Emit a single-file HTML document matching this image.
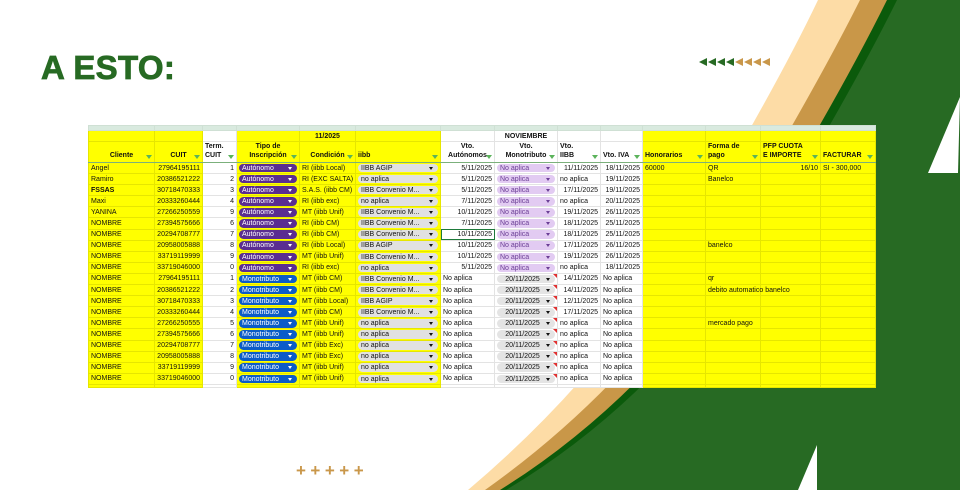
<!DOCTYPE html>
<html><head><meta charset="utf-8">
<style>
*{margin:0;padding:0;box-sizing:border-box}
body{width:960px;height:490px;overflow:hidden;background:#fff;position:relative;font-family:"Liberation Sans",Arial,sans-serif}
#bg{position:absolute;left:0;top:0}
h1{position:absolute;left:41px;top:50px;font-size:33px;font-weight:bold;color:#276a23;line-height:36px;letter-spacing:0.3px;-webkit-text-stroke:0.8px #276a23}
.arr{position:absolute;top:58px;left:699px;font-size:0}
.arr i{display:inline-block;width:0;height:0;border-top:4.5px solid transparent;border-bottom:4.5px solid transparent;border-right:8px solid #276a23;margin-right:1px}
.arr i.t{border-right-color:#c9974a}
.plus{position:absolute;left:296px;top:461px;color:#c9974a;font-size:17px;font-weight:bold;letter-spacing:4.5px}
table{position:absolute;left:88px;top:125px;border-collapse:collapse;table-layout:fixed;width:787px;font-size:7px;color:#111;background:#fff}
td{border:1px solid #e3e3e3;height:11.1px;padding:0 2px;white-space:nowrap;overflow:hidden;line-height:9px}
.y{background:#ffff00;border-color:#e6e600}
tr.top td{height:5px;background:#d9eadf;border-color:#cfe0d4}
tr.h1 td{height:11px;font-weight:bold;text-align:center}
tr.h2 td{height:21px;font-weight:bold;vertical-align:bottom;padding-bottom:2px;border-bottom:1px solid #7bb07b;position:relative}
tr.h2 td b{position:absolute;right:2px;bottom:3px;width:0;height:0;border-left:3px solid transparent;border-right:3px solid transparent;border-top:4px solid #5bb35b}
.r{text-align:right}
.c{text-align:center}
.chip{display:block;border-radius:5px;height:8.5px;line-height:9px;padding:0 3px;font-size:7px;position:relative}
.chip:after{content:"";position:absolute;right:5px;top:3px;border-left:2.5px solid transparent;border-right:2.5px solid transparent;border-top:3px solid currentColor}
.au{background:#5a2d91;color:#fff}
.mo{background:#0b5cc8;color:#fff}
.ib{background:#e1e1e1;color:#111}
.na{background:#e2cbf2;color:#6a3d95}
.dt{background:#e4e4e4;color:#111;text-align:center;padding-right:10px}
.red{position:relative}
.red:after{content:"";position:absolute;right:0;top:0;border-left:4px solid transparent;border-top:4px solid #e03030}
.sel{outline:1.5px solid #1e7a3a;outline-offset:-1px}
tr.last td{height:3px;border-top:1px solid #7bb07b}
</style></head><body>
<svg id="bg" width="960" height="490" viewBox="0 0 960 490">
<path d="M818,0 Q780,80 700,215 Q610,370 468,490 L960,490 L960,0Z" fill="#fddca6"/>
<path d="M860,0 Q820,80 740,215 Q640,380 485,490 L960,490 L960,0Z" fill="#c99748"/>
<path d="M887,0 Q845,85 770,210 Q660,390 500,490 L960,490 L960,0Z" fill="#0b5a0b"/>
<path d="M897,0 Q855,85 780,210 Q670,392 506,490 L960,490 L960,0Z" fill="#276a23"/>
<path d="M960,97 L928,173 L958,173Z" fill="#fff"/>
<path d="M798,490 L817,445 L817,490Z" fill="#fff"/>
</svg>
<h1>A ESTO:</h1>
<div class="arr"><i></i><i></i><i></i><i></i><i class="t"></i><i class="t"></i><i class="t"></i><i class="t"></i></div>
<div class="plus">+++++</div>
<table>
<colgroup><col style="width:66px"><col style="width:48px"><col style="width:34px"><col style="width:63px"><col style="width:56px"><col style="width:85px"><col style="width:54px"><col style="width:63px"><col style="width:43px"><col style="width:42px"><col style="width:63px"><col style="width:55px"><col style="width:60px"><col style="width:55px"></colgroup>
<tr class="top"><td></td><td></td><td></td><td></td><td></td><td></td><td></td><td></td><td></td><td></td><td></td><td></td><td></td><td></td></tr>
<tr class="h1"><td class="y"></td><td class="y"></td><td></td><td class="y"></td><td class="y">11/2025</td><td class="y"></td><td></td><td>NOVIEMBRE</td><td></td><td></td><td class="y"></td><td class="y"></td><td class="y"></td><td class="y"></td></tr>
<tr class="h2"><td class="y c">Cliente<b></b></td><td class="y c">CUIT<b></b></td><td>Term.<br>CUIT<b></b></td><td class="y c">Tipo de<br>Inscripción<b></b></td><td class="y c">Condición<b></b></td><td class="y">iibb<b></b></td><td class="c">Vto.<br>Autónomos<b></b></td><td class="c">Vto.<br>Monotributo<b></b></td><td>Vto.<br>IIBB<b></b></td><td>Vto. IVA<b></b></td><td class="y">Honorarios<b></b></td><td class="y">Forma de<br>pago<b></b></td><td class="y">PFP CUOTA<br>E IMPORTE<b></b></td><td class="y">FACTURAR<b></b></td></tr>
<tr><td class="y">Angel</td><td class="y r">27964195111</td><td class="r">1</td><td class="y"><span class="chip au">Autónomo</span></td><td class="y">RI (iibb Local)</td><td class="y"><span class="chip ib">IIBB AGIP</span></td><td class="r">5/11/2025</td><td><span class="chip na">No aplica</span></td><td class="r">11/11/2025</td><td class="r">18/11/2025</td><td class="y">60000</td><td class="y">QR</td><td class="y r">16/10</td><td class="y">SI - 300,000</td></tr>
<tr><td class="y">Ramiro</td><td class="y r">20386521222</td><td class="r">2</td><td class="y"><span class="chip au">Autónomo</span></td><td class="y">RI (EXC SALTA)</td><td class="y"><span class="chip ib">no aplica</span></td><td class="r">5/11/2025</td><td><span class="chip na">No aplica</span></td><td>no aplica</td><td class="r">19/11/2025</td><td class="y"></td><td class="y">Banelco</td><td class="y"></td><td class="y"></td></tr>
<tr><td class="y"><b>FSSAS</b></td><td class="y r">30718470333</td><td class="r">3</td><td class="y"><span class="chip au">Autónomo</span></td><td class="y">S.A.S. (iibb CM)</td><td class="y"><span class="chip ib">IIBB Convenio M...</span></td><td class="r">5/11/2025</td><td><span class="chip na">No aplica</span></td><td class="r">17/11/2025</td><td class="r">19/11/2025</td><td class="y"></td><td class="y"></td><td class="y"></td><td class="y"></td></tr>
<tr><td class="y">Maxi</td><td class="y r">20333260444</td><td class="r">4</td><td class="y"><span class="chip au">Autónomo</span></td><td class="y">RI (iibb exc)</td><td class="y"><span class="chip ib">no aplica</span></td><td class="r">7/11/2025</td><td><span class="chip na">No aplica</span></td><td>no aplica</td><td class="r">20/11/2025</td><td class="y"></td><td class="y"></td><td class="y"></td><td class="y"></td></tr>
<tr><td class="y">YANINA</td><td class="y r">27266250559</td><td class="r">9</td><td class="y"><span class="chip au">Autónomo</span></td><td class="y">MT (iibb Unif)</td><td class="y"><span class="chip ib">IIBB Convenio M...</span></td><td class="r">10/11/2025</td><td><span class="chip na">No aplica</span></td><td class="r">19/11/2025</td><td class="r">26/11/2025</td><td class="y"></td><td class="y"></td><td class="y"></td><td class="y"></td></tr>
<tr><td class="y">NOMBRE</td><td class="y r">27394575666</td><td class="r">6</td><td class="y"><span class="chip au">Autónomo</span></td><td class="y">RI (iibb CM)</td><td class="y"><span class="chip ib">IIBB Convenio M...</span></td><td class="r">7/11/2025</td><td><span class="chip na">No aplica</span></td><td class="r">18/11/2025</td><td class="r">25/11/2025</td><td class="y"></td><td class="y"></td><td class="y"></td><td class="y"></td></tr>
<tr><td class="y">NOMBRE</td><td class="y r">20294708777</td><td class="r">7</td><td class="y"><span class="chip au">Autónomo</span></td><td class="y">RI (iibb CM)</td><td class="y"><span class="chip ib">IIBB Convenio M...</span></td><td class="r sel">10/11/2025</td><td><span class="chip na">No aplica</span></td><td class="r">18/11/2025</td><td class="r">25/11/2025</td><td class="y"></td><td class="y"></td><td class="y"></td><td class="y"></td></tr>
<tr><td class="y">NOMBRE</td><td class="y r">20958005888</td><td class="r">8</td><td class="y"><span class="chip au">Autónomo</span></td><td class="y">RI (iibb Local)</td><td class="y"><span class="chip ib">IIBB AGIP</span></td><td class="r">10/11/2025</td><td><span class="chip na">No aplica</span></td><td class="r">17/11/2025</td><td class="r">26/11/2025</td><td class="y"></td><td class="y">banelco</td><td class="y"></td><td class="y"></td></tr>
<tr><td class="y">NOMBRE</td><td class="y r">33719119999</td><td class="r">9</td><td class="y"><span class="chip au">Autónomo</span></td><td class="y">MT (iibb Unif)</td><td class="y"><span class="chip ib">IIBB Convenio M...</span></td><td class="r">10/11/2025</td><td><span class="chip na">No aplica</span></td><td class="r">19/11/2025</td><td class="r">26/11/2025</td><td class="y"></td><td class="y"></td><td class="y"></td><td class="y"></td></tr>
<tr><td class="y">NOMBRE</td><td class="y r">33719046000</td><td class="r">0</td><td class="y"><span class="chip au">Autónomo</span></td><td class="y">RI (iibb exc)</td><td class="y"><span class="chip ib">no aplica</span></td><td class="r">5/11/2025</td><td><span class="chip na">No aplica</span></td><td>no aplica</td><td class="r">18/11/2025</td><td class="y"></td><td class="y"></td><td class="y"></td><td class="y"></td></tr>
<tr><td class="y">NOMBRE</td><td class="y r">27964195111</td><td class="r">1</td><td class="y"><span class="chip mo">Monotributo</span></td><td class="y">MT (iibb CM)</td><td class="y"><span class="chip ib">IIBB Convenio M...</span></td><td>No aplica</td><td class="red"><span class="chip dt">20/11/2025</span></td><td class="r">14/11/2025</td><td>No aplica</td><td class="y"></td><td class="y">qr</td><td class="y"></td><td class="y"></td></tr>
<tr><td class="y">NOMBRE</td><td class="y r">20386521222</td><td class="r">2</td><td class="y"><span class="chip mo">Monotributo</span></td><td class="y">MT (iibb CM)</td><td class="y"><span class="chip ib">IIBB Convenio M...</span></td><td>No aplica</td><td class="red"><span class="chip dt">20/11/2025</span></td><td class="r">14/11/2025</td><td>No aplica</td><td class="y"></td><td class="y" style="overflow:visible">debito automatico banelco</td><td class="y"></td><td class="y"></td></tr>
<tr><td class="y">NOMBRE</td><td class="y r">30718470333</td><td class="r">3</td><td class="y"><span class="chip mo">Monotributo</span></td><td class="y">MT (iibb Local)</td><td class="y"><span class="chip ib">IIBB AGIP</span></td><td>No aplica</td><td class="red"><span class="chip dt">20/11/2025</span></td><td class="r">12/11/2025</td><td>No aplica</td><td class="y"></td><td class="y"></td><td class="y"></td><td class="y"></td></tr>
<tr><td class="y">NOMBRE</td><td class="y r">20333260444</td><td class="r">4</td><td class="y"><span class="chip mo">Monotributo</span></td><td class="y">MT (iibb CM)</td><td class="y"><span class="chip ib">IIBB Convenio M...</span></td><td>No aplica</td><td class="red"><span class="chip dt">20/11/2025</span></td><td class="r">17/11/2025</td><td>No aplica</td><td class="y"></td><td class="y"></td><td class="y"></td><td class="y"></td></tr>
<tr><td class="y">NOMBRE</td><td class="y r">27266250555</td><td class="r">5</td><td class="y"><span class="chip mo">Monotributo</span></td><td class="y">MT (iibb Unif)</td><td class="y"><span class="chip ib">no aplica</span></td><td>No aplica</td><td class="red"><span class="chip dt">20/11/2025</span></td><td>no aplica</td><td>No aplica</td><td class="y"></td><td class="y">mercado pago</td><td class="y"></td><td class="y"></td></tr>
<tr><td class="y">NOMBRE</td><td class="y r">27394575666</td><td class="r">6</td><td class="y"><span class="chip mo">Monotributo</span></td><td class="y">MT (iibb Unif)</td><td class="y"><span class="chip ib">no aplica</span></td><td>No aplica</td><td class="red"><span class="chip dt">20/11/2025</span></td><td>no aplica</td><td>No aplica</td><td class="y"></td><td class="y"></td><td class="y"></td><td class="y"></td></tr>
<tr><td class="y">NOMBRE</td><td class="y r">20294708777</td><td class="r">7</td><td class="y"><span class="chip mo">Monotributo</span></td><td class="y">MT (iibb Exc)</td><td class="y"><span class="chip ib">no aplica</span></td><td>No aplica</td><td class="red"><span class="chip dt">20/11/2025</span></td><td>no aplica</td><td>No aplica</td><td class="y"></td><td class="y"></td><td class="y"></td><td class="y"></td></tr>
<tr><td class="y">NOMBRE</td><td class="y r">20958005888</td><td class="r">8</td><td class="y"><span class="chip mo">Monotributo</span></td><td class="y">MT (iibb Exc)</td><td class="y"><span class="chip ib">no aplica</span></td><td>No aplica</td><td class="red"><span class="chip dt">20/11/2025</span></td><td>no aplica</td><td>No aplica</td><td class="y"></td><td class="y"></td><td class="y"></td><td class="y"></td></tr>
<tr><td class="y">NOMBRE</td><td class="y r">33719119999</td><td class="r">9</td><td class="y"><span class="chip mo">Monotributo</span></td><td class="y">MT (iibb Unif)</td><td class="y"><span class="chip ib">no aplica</span></td><td>No aplica</td><td class="red"><span class="chip dt">20/11/2025</span></td><td>no aplica</td><td>No aplica</td><td class="y"></td><td class="y"></td><td class="y"></td><td class="y"></td></tr>
<tr><td class="y">NOMBRE</td><td class="y r">33719046000</td><td class="r">0</td><td class="y"><span class="chip mo">Monotributo</span></td><td class="y">MT (iibb Unif)</td><td class="y"><span class="chip ib">no aplica</span></td><td>No aplica</td><td class="red"><span class="chip dt">20/11/2025</span></td><td>no aplica</td><td>No aplica</td><td class="y"></td><td class="y"></td><td class="y"></td><td class="y"></td></tr>
<tr class="last"><td class="y"></td><td class="y"></td><td></td><td class="y"></td><td class="y"></td><td class="y"></td><td></td><td></td><td></td><td></td><td class="y"></td><td class="y"></td><td class="y"></td><td class="y"></td></tr>
</table>
</body></html>
